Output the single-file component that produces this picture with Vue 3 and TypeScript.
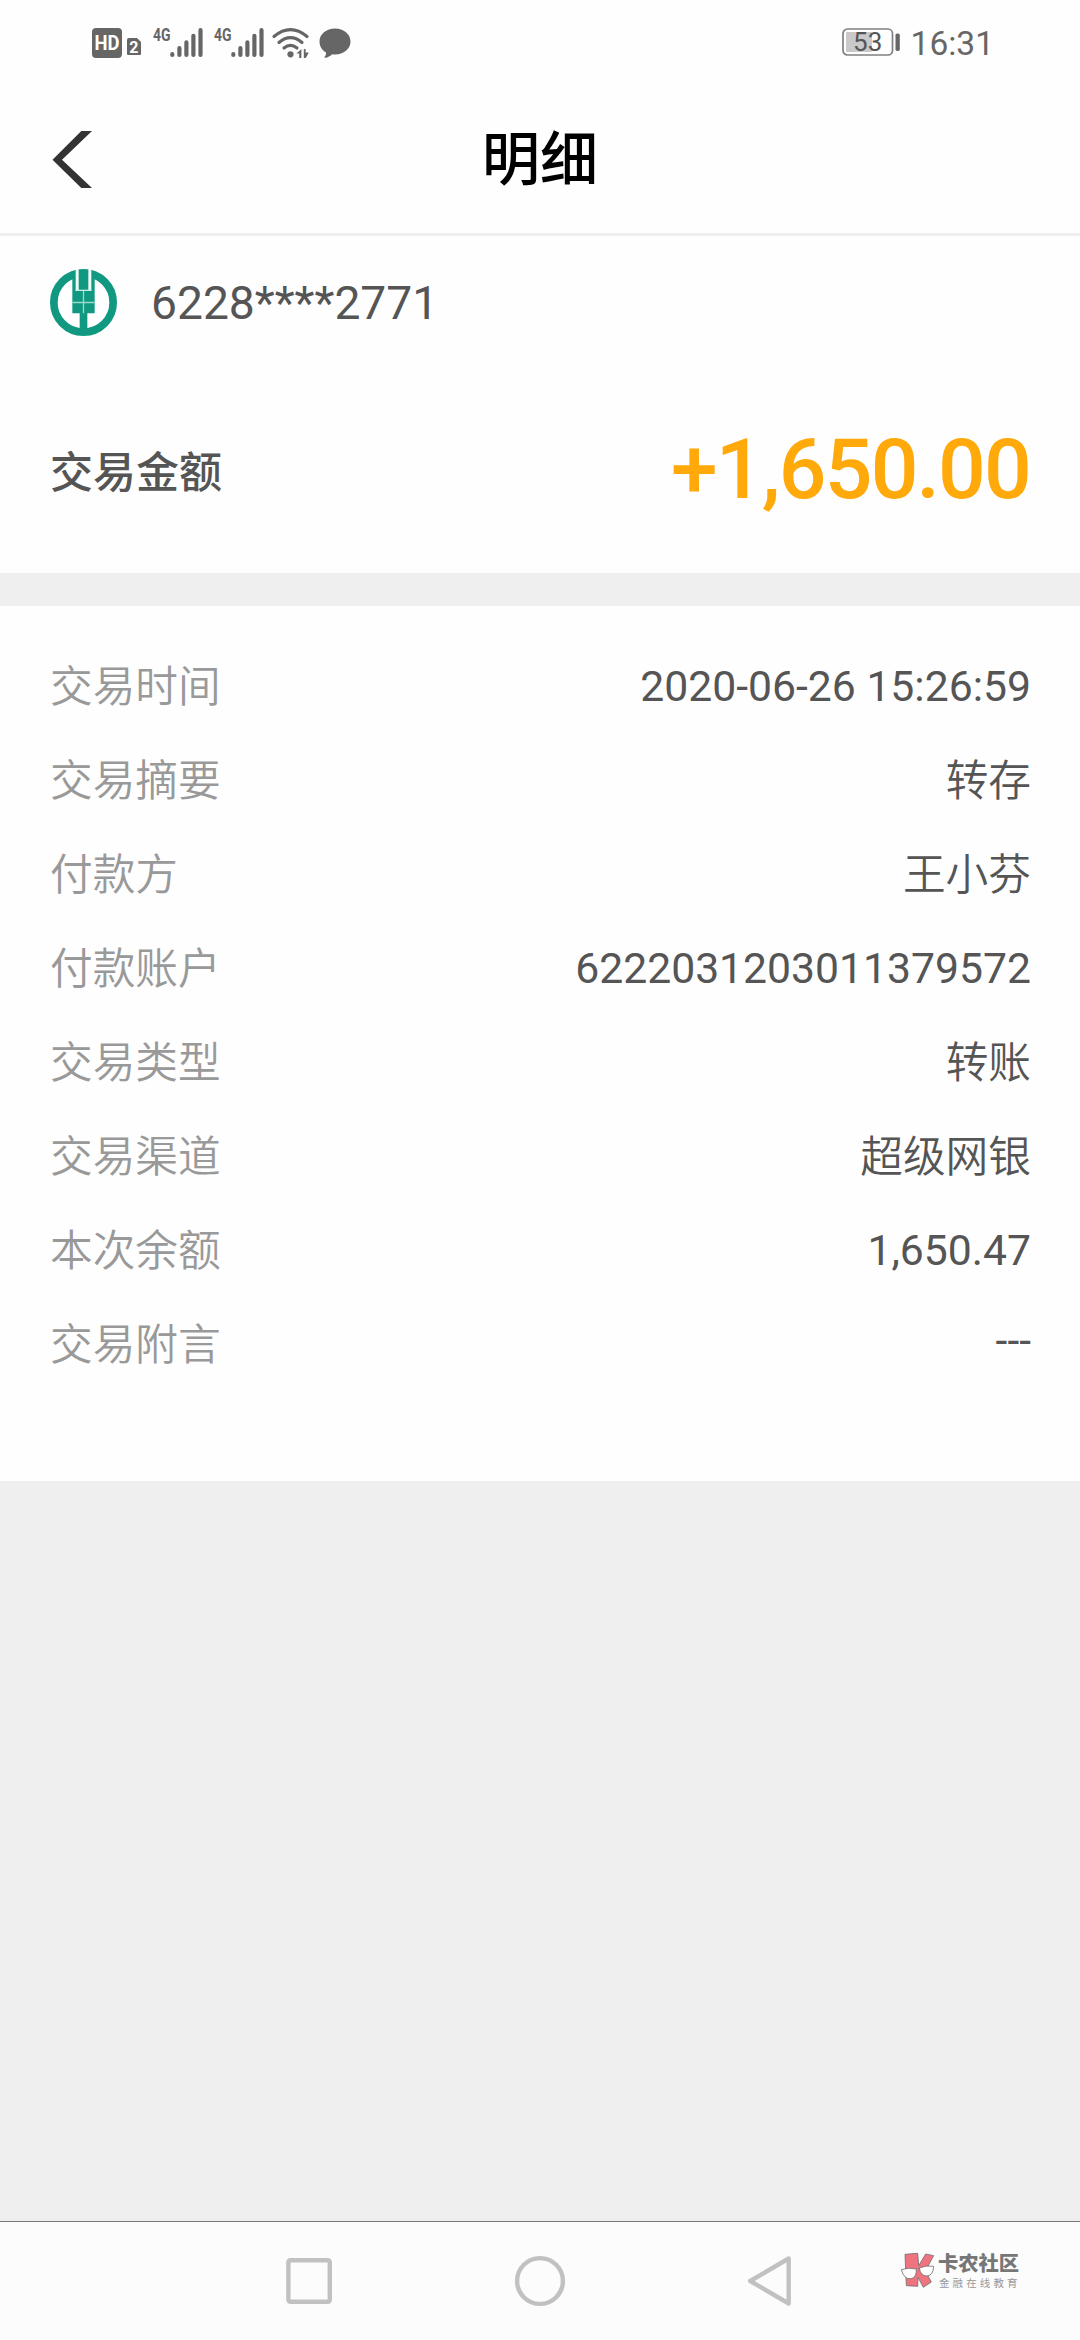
<script setup lang="ts">
interface DetailRow {
  label: string
  value: string
}

const rows: DetailRow[] = [
  { label: '交易时间', value: '2020-06-26 15:26:59' },
  { label: '交易摘要', value: '转存' },
  { label: '付款方', value: '王小芬' },
  { label: '付款账户', value: '6222031203011379572' },
  { label: '交易类型', value: '转账' },
  { label: '交易渠道', value: '超级网银' },
  { label: '本次余额', value: '1,650.47' },
  { label: '交易附言', value: '---' },
]

const isNumeric = (value: string) => /\d/.test(value)
const isEmpty = (value: string) => value === '---'
</script>

<template>
  <div class="screen">
    <div class="status">
      <svg class="hd" width="50" height="32" viewBox="0 0 50 32">
        <rect x="0" y="1" width="30" height="30" rx="4" fill="#666" />
        <text x="15" y="23" class="hd-text" text-anchor="middle" textLength="25" lengthAdjust="spacingAndGlyphs">HD</text>
        <path d="M37 11h8l4 4v12q0 1-1 1H36q-1 0-1-1V13q0-2 2-2z" fill="#666" />
        <text x="41.8" y="25.5" class="sim-text" text-anchor="middle">2</text>
      </svg>
      <svg v-for="n in 2" :key="n" class="signal" width="50" height="32" viewBox="0 0 50 32">
        <text x="0" y="14" class="net-text" textLength="17.5" lengthAdjust="spacingAndGlyphs">4G</text>
        <g stroke="#666" stroke-width="4.2" stroke-linecap="round">
          <path d="M19.3 27.2v.8M26.4 21v7M33.4 15.4V28M40.4 8.8V28M47.5 3.2V28" />
        </g>
      </svg>
      <svg class="wifi" width="38" height="32" viewBox="0 0 38 32">
        <g fill="none" stroke="#666" stroke-width="3.2" stroke-linecap="round">
          <path d="M2 9.5Q18.500-4.200 35 9.500" />
          <path d="M7 15.500Q18.500 5.700 30 15.500" />
          <path d="M12 21Q18.500 15.600 25 21" />
        </g>
        <circle cx="18.500" cy="27.300" r="3.100" fill="#666" />
        <path d="M29.400 22v9h-2.200v-4.500h-2.800zM31.800 31v-9h1.800v3.500h3.200l-3 5.500z" fill="#666" />
      </svg>
      <svg class="bubble" width="32" height="32" viewBox="0 0 32 32">
        <path d="M16 1.500c8.700 0 15.500 5.600 15.500 13s-6.800 13-15.500 13c-1 0-1.800-.1-2.700-.3-2 1.900-4.400 3.200-7 3.600-.8.100-1-.5-.6-1 1.100-1.300 1.500-2.800 1.300-4.200C3 23.200.500 19.200.500 14.500c0-7.400 6.800-13 15.500-13z" fill="#666" />
      </svg>
      <svg class="battery" width="60" height="32" viewBox="0 0 60 32">
        <rect x="1" y="2" width="49.500" height="26" rx="4.500" fill="#fff" stroke="#808080" stroke-width="1.700" />
        <rect x="4" y="5" width="26" height="20" rx="1" fill="#c9c9c9" />
        <rect x="53.500" y="6.500" width="4.300" height="17.500" rx="1.800" fill="#666" />
        <text x="25.700" y="23.800" class="battery-text" text-anchor="middle">53</text>
      </svg>
      <span class="clock">16:31</span>
    </div>

    <header class="nav">
      <svg class="back" width="40" height="58" viewBox="0 0 40 58">
        <path d="M.5 28.700 29.300 0H40L10 28.700 40 57H29.300z" fill="#333" />
      </svg>
      <h1 class="title">明细</h1>
    </header>

    <section class="summary">
      <div class="account">
        <svg class="logo" width="67" height="67" viewBox="0 0 201 201">
          <circle cx="100.500" cy="100.500" r="89" fill="#fff" stroke="#109880" stroke-width="23" />
          <path d="M67 20h67v113h-22v50H89v-50H67z" fill="#109880" />
          <path d="M81.500 0v66M119.500 0v66" stroke="#f0fbf8" stroke-width="9" />
          <path d="M77 64h47" stroke="#c5ebe2" stroke-width="4" />
          <path d="M100.500 66v67M67 100.500h67" stroke="#9bdacb" stroke-width="4" />
        </svg>
        <span class="card-no">6228****2771</span>
      </div>
      <div class="amount-row">
        <span class="amount-label">交易金额</span>
        <span class="amount">+1,650.00</span>
      </div>
    </section>

    <section class="details">
      <div v-for="row in rows" :key="row.label" class="row">
        <span class="label">{{ row.label }}</span>
        <span class="value" :class="{ numeric: isNumeric(row.value), empty: isEmpty(row.value) }">{{ row.value }}</span>
      </div>
    </section>

    <div class="filler"></div>

    <footer class="system-nav">
      <svg width="56" height="56" viewBox="0 0 56 56" class="key">
        <rect x="7.400" y="7.300" width="41.400" height="41.400" rx="2" />
      </svg>
      <svg width="56" height="56" viewBox="0 0 56 56" class="key">
        <circle cx="28" cy="28" r="22.900" />
      </svg>
      <svg width="56" height="56" viewBox="0 0 56 56" class="key">
        <path d="M45.700 5.500 7.200 28l38.500 22.500z" stroke-linejoin="round" />
      </svg>
      <div class="watermark">
        <svg width="36" height="38" viewBox="0 0 108 114">
          <g fill="#ef7480" stroke="#707070" stroke-width="2.500" stroke-linejoin="round">
            <path d="M15 7 53 4 56 41 77 6 101 11 76 57 94 90 70 106 54 76 53 103 19 101z" />
          </g>
          <g fill="#fff" stroke="#707070" stroke-width="2.500">
            <path d="M4 53q22-8 45-2 1 26-16 29Q12 83 4 53z" />
            <path d="M58 48q20-9 43-5-1 28-21 29-18 0-22-24zM49 53q4-5 9-3" />
          </g>
        </svg>
        <div class="mark-text">
          <span class="mark-name">卡农社区</span>
          <span class="mark-sub">金融在线教育</span>
        </div>
      </div>
    </footer>
  </div>
</template>

<style>
body {
  margin: 0;
  background: #efefef;
}
</style>

<style scoped>
.screen {
  display: flex;
  flex-direction: column;
  width: 1080px;
  height: 2340px;
  overflow: hidden;
  background: #efefef;
  font-family: Roboto, "Noto Sans CJK SC", sans-serif;
  color: #555;
}
.status {
  display: flex;
  box-sizing: border-box;
  flex: none;
  height: 86px;
  padding: 27px 86px 0 92px;
  background: #fefefe;
}
.status svg {
  flex: none;
  overflow: visible;
}
.hd-text {
  font-size: 21px;
  font-weight: 700;
  fill: #fff;
}
.sim-text {
  font-size: 16px;
  font-weight: 700;
  fill: #fff;
}
.net-text {
  font-size: 19px;
  font-weight: 700;
  fill: #666;
}
.signal {
  margin-left: 11px;
}
.wifi {
  margin-left: 8px;
}
.bubble {
  margin-left: 9px;
}
.battery {
  margin-left: auto;
}
.battery-text {
  font-size: 26px;
  fill: #555;
}
.clock {
  margin-left: 9px;
  font-size: 33.500px;
  line-height: 33px;
  color: #666;
}
.nav {
  display: flex;
  position: relative;
  box-sizing: border-box;
  flex: none;
  height: 150px;
  align-items: center;
  justify-content: center;
  border-bottom: 3px solid #efefef;
  background: #fefefe;
}
.back {
  position: absolute;
  left: 52px;
  top: 45px;
}
.title {
  margin: 0;
  font-size: 58px;
  font-weight: 500;
  line-height: 84px;
  color: #000;
}
.summary {
  box-sizing: border-box;
  flex: none;
  height: 337px;
  padding: 33px 50px 0;
  background: #fefefe;
}
.account {
  display: flex;
  height: 67px;
  align-items: center;
}
.card-no {
  margin-left: 34px;
  padding-top: 2px;
  font-size: 46.200px;
  line-height: 67px;
}
.amount-row {
  display: flex;
  height: 100px;
  margin-top: 84px;
  align-items: center;
  justify-content: space-between;
}
.amount-label {
  padding-bottom: 2px;
  font-size: 43px;
  font-weight: 500;
}
.amount {
  font-size: 84px;
  font-weight: 500;
  letter-spacing: -1.800px;
  line-height: 100px;
  color: #ffa90a;
}
.details {
  box-sizing: border-box;
  flex: none;
  height: 875px;
  margin-top: 33px;
  padding: 34px 49px 0 50px;
  background: #fefefe;
}
.row {
  display: flex;
  height: 94px;
  align-items: center;
  justify-content: space-between;
  font-size: 42.700px;
  line-height: 94px;
}
.label {
  font-weight: 350;
  color: #999;
}
.value {
  font-weight: 350;
  color: #555;
}
.numeric {
  padding-bottom: 3px;
  font-weight: 400;
}
.empty {
  padding-bottom: 10px;
  font-weight: 400;
}
.filler {
  flex: 1;
}
.system-nav {
  display: flex;
  position: relative;
  box-sizing: border-box;
  flex: none;
  height: 119px;
  padding-top: 31px;
  justify-content: center;
  gap: 175px;
  border-top: 1px solid #777;
  background: #fcfcfc;
}
.key {
  fill: none;
  stroke: #c1c1c1;
  stroke-width: 4.400;
}
.watermark {
  display: flex;
  position: absolute;
  left: 900px;
  top: 30px;
}
.mark-text {
  display: flex;
  flex-direction: column;
  margin-left: 2px;
}
.mark-name {
  font-size: 20.300px;
  font-weight: 900;
  line-height: 24px;
  color: #777;
}
.mark-sub {
  margin-left: 1px;
  font-size: 10.500px;
  letter-spacing: 3.100px;
  line-height: 15px;
  white-space: nowrap;
  color: #999;
}
</style>
